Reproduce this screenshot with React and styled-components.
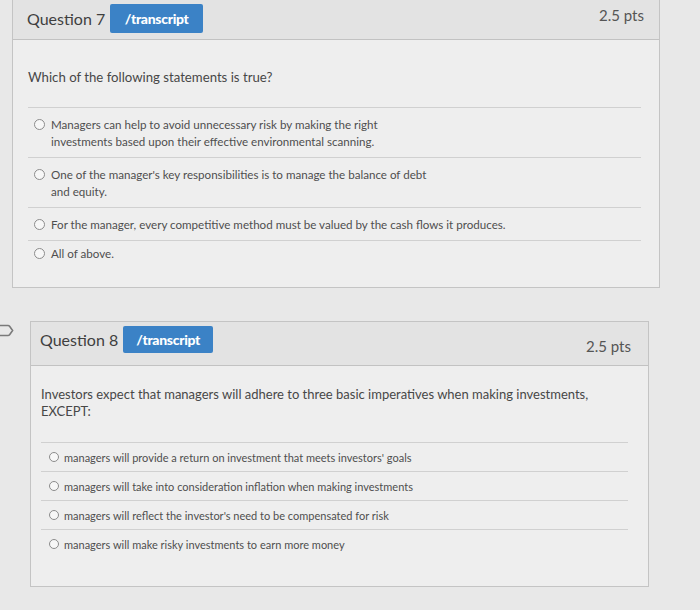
import React from "react";
import styled, { createGlobalStyle } from "styled-components";

const Global = createGlobalStyle`
  html, body { margin: 0; padding: 0; background: #e8e8e8; }
  body { font-family: Lato, "Open Sans", sans-serif; color: #4b4b4b; width: 700px; height: 610px; overflow: hidden; }
`;

const Page = styled.div`
  display: flex;
  flex-direction: column;
  gap: 33px;
`;

const Row = styled.div`
  display: flex;
  align-items: flex-start;
  margin-top: ${(p) => p.$top || 0}px;
`;

const Gutter = styled.div`
  width: ${(p) => p.$w}px;
  flex: none;
  display: flex;
  justify-content: flex-start;
  padding-top: 3px;
`;

const Card = styled.section`
  width: ${(p) => p.$w}px;
  flex: none;
  border: 1px solid #c4c4c4;
  background: #eeeeee;
`;

const Header = styled.header`
  height: ${(p) => p.$h}px;
  box-sizing: border-box;
  background: #e3e3e3;
  border-bottom: 1px solid #c2c2c2;
  display: flex;
  align-items: center;
  padding: 0 ${(p) => p.$pr}px ${(p) => p.$pb || 0}px ${(p) => p.$pl}px;
`;

const Title = styled.h2`
  margin: 0;
  font-size: 16px;
  font-weight: 400;
  color: #3f3f3f;
`;

const Badge = styled.span`
  margin-left: 5px;
  display: inline-flex;
  align-items: center;
  justify-content: center;
  width: ${(p) => p.$w}px;
  height: ${(p) => p.$h}px;
  background: #3b82c6;
  border-radius: 2px;
  color: #fff;
  font-weight: 900;
  font-size: 14px;
  letter-spacing: -0.3px;
`;

const Points = styled.span`
  margin-left: auto;
  font-size: 15px;
  color: #555;
  margin-top: ${(p) => p.$mt || 0}px;
`;

const Body = styled.div`
  padding: ${(p) => p.$pt}px ${(p) => p.$pr}px ${(p) => p.$pb}px ${(p) => p.$pl}px;
`;

const Prompt = styled.p`
  margin: 0 0 ${(p) => p.$mb}px 0;
  font-size: ${(p) => p.$fs}px;
  line-height: ${(p) => p.$lh}px;
  color: #474747;
`;

const Answers = styled.ul`
  list-style: none;
  margin: 0;
  padding: 0;
  border-top: 1px solid #d0d0d0;
`;

const Answer = styled.li`
  display: flex;
  align-items: flex-start;
  gap: ${(p) => p.$gap}px;
  padding: ${(p) => p.$pt}px 0 ${(p) => p.$pb}px ${(p) => p.$indent}px;
  border-bottom: 1px solid ${(p) => (p.$last ? "transparent" : "#d0d0d0")};
  font-size: ${(p) => p.$fs}px;
  line-height: ${(p) => p.$lh}px;
  color: #4e4e4e;
`;

const Radio = styled.span`
  flex: none;
  width: ${(p) => p.$s}px;
  height: ${(p) => p.$s}px;
  margin-top: ${(p) => p.$mt}px;
  border: 1px solid #8c8c8c;
  border-radius: 50%;
  background: #f7f7f7;
  box-sizing: border-box;
`;

const Flag = () => (
  <svg width="16" height="13" viewBox="0 0 16 13" style={{ marginLeft: -2 }}>
    <path d="M0 1.5 H10 Q11 1.5 11.6 2.2 L14.6 6.5 L11.6 10.8 Q11 11.5 10 11.5 H0" fill="none" stroke="#7a7a7a" strokeWidth="1.6" />
  </svg>
);

const q7 = [
  ["Managers can help to avoid unnecessary risk by making the right", "investments based upon their effective environmental scanning."],
  ["One of the manager's key responsibilities is to manage the balance of debt", "and equity."],
  ["For the manager, every competitive method must be valued by the cash flows it produces."],
  ["All of above."],
];

const q8 = [
  "managers will provide a return on investment that meets investors' goals",
  "managers will take into consideration inflation when making investments",
  "managers will reflect the investor's need to be compensated for risk",
  "managers will make risky investments to earn more money",
];

export default function App() {
  return (
    <>
      <Global />
      <Page>
        <Row $top={-3}>
          <Gutter $w={12} />
          <Card $w={646}>
            <Header $h={42} $pl={14} $pr={15}>
              <Title>Question 7</Title>
              <Badge $w={93} $h={29}>/transcript</Badge>
              <Points $mt={-7}>2.5 pts</Points>
            </Header>
            <Body $pt={27} $pr={18} $pb={20} $pl={15}>
              <Prompt $fs={13.2} $lh={20} $mb={20}>Which of the following statements is true?</Prompt>
              <Answers>
                {q7.map((lines, i) => (
                  <Answer
                    key={i}
                    $gap={6}
                    $pt={i === 3 ? 4 : 7.5}
                    $pb={i === 3 ? 4 : 7.5}
                    $indent={6}
                    $fs={11.6}
                    $lh={17}
                    $last={i === 3}
                  >
                    <Radio $s={11} $mt={3} />
                    <span>
                      {lines[0]}
                      {lines[1] && <br />}
                      {lines[1]}
                    </span>
                  </Answer>
                ))}
              </Answers>
            </Body>
          </Card>
        </Row>
        <Row>
          <Gutter $w={30}>
            <Flag />
          </Gutter>
          <Card $w={617}>
            <Header $h={44} $pl={9} $pr={17} $pb={8}>
              <Title>Question 8</Title>
              <Badge $w={90} $h={27}>/transcript</Badge>
              <Points $mt={12}>2.5 pts</Points>
            </Header>
            <Body $pt={20} $pr={20} $pb={27} $pl={10}>
              <Prompt $fs={13} $lh={17} $mb={22}>
                Investors expect that managers will adhere to three basic imperatives when making investments,
                <br />
                EXCEPT:
              </Prompt>
              <Answers>
                {q8.map((t, i) => (
                  <Answer key={i} $gap={5} $pt={6.5} $pb={6.5} $indent={8} $fs={11} $lh={15} $last={i === 3}>
                    <Radio $s={10} $mt={2} />
                    <span>{t}</span>
                  </Answer>
                ))}
              </Answers>
            </Body>
          </Card>
        </Row>
      </Page>
    </>
  );
}
